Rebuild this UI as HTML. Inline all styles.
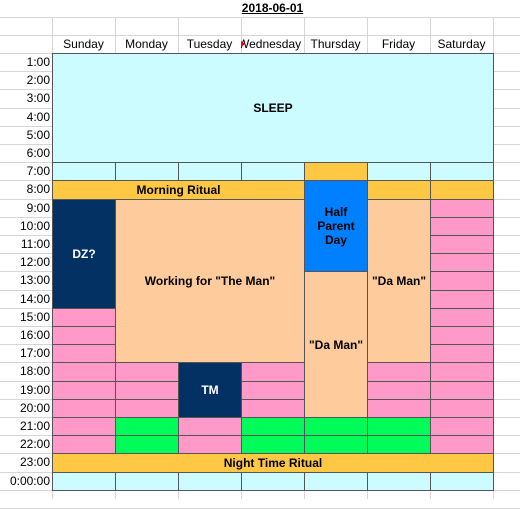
<!DOCTYPE html>
<html><head><meta charset="utf-8"><style>
*{margin:0;padding:0;box-sizing:border-box}
body{width:520px;height:499px;overflow:hidden;background:#fff;font-family:"Liberation Sans",Arial,sans-serif;font-size:12px;color:#000;position:relative}
.c{position:absolute;border:1px solid #555;display:flex;align-items:center;justify-content:center;text-align:center;font-weight:bold;font-size:12px;line-height:14px}
.h{position:absolute;background:#d6d6d6}
.t{position:absolute;text-align:center;font-size:12px;line-height:18px}
.r{position:absolute;left:0;width:50px;text-align:right;font-size:12px;line-height:18px}
</style></head><body>
<div id="g"></div>
<div class="t" style="left:52px;width:441px;top:0;font-weight:bold;text-decoration:underline;line-height:17px">2018-06-01</div>
<div class="t" style="left:52px;width:63px;top:35px">Sunday</div>
<div class="t" style="left:115px;width:63px;top:35px">Monday</div>
<div class="t" style="left:178px;width:63px;top:35px">Tuesday</div>
<div class="t" style="left:241px;width:63px;top:35px;overflow:hidden;white-space:nowrap"><span style="position:relative;left:-3px">Wednesday</span></div>
<div class="t" style="left:304px;width:63px;top:35px">Thursday</div>
<div class="t" style="left:367px;width:63px;top:35px">Friday</div>
<div class="t" style="left:430px;width:63px;top:35px">Saturday</div>
<div id="hrs">
<div class="r" style="top:53px">1:00</div><div class="r" style="top:71px">2:00</div><div class="r" style="top:89px">3:00</div><div class="r" style="top:108px">4:00</div><div class="r" style="top:126px">5:00</div><div class="r" style="top:144px">6:00</div><div class="r" style="top:162px">7:00</div><div class="r" style="top:180px">8:00</div><div class="r" style="top:199px">9:00</div><div class="r" style="top:217px">10:00</div><div class="r" style="top:235px">11:00</div><div class="r" style="top:253px">12:00</div><div class="r" style="top:271px">13:00</div><div class="r" style="top:290px">14:00</div><div class="r" style="top:308px">15:00</div><div class="r" style="top:326px">16:00</div><div class="r" style="top:344px">17:00</div><div class="r" style="top:362px">18:00</div><div class="r" style="top:381px">19:00</div><div class="r" style="top:399px">20:00</div><div class="r" style="top:417px">21:00</div><div class="r" style="top:435px">22:00</div><div class="r" style="top:453px">23:00</div><div class="r" style="top:472px">0:00:00</div>
</div>
<div id="cells"></div>
<div class="c" style="left:52px;top:53px;width:442px;height:110px;background:#ccfcff">SLEEP</div>
<div class="c" style="left:52px;top:180px;width:253px;height:20px;background:#fec845">Morning Ritual</div>
<div class="c" style="left:304px;top:180px;width:64px;height:92px;background:#0080fe">Half<br>Parent<br>Day</div>
<div class="c" style="left:52px;top:199px;width:64px;height:110px;background:#033163;color:#fff">DZ?</div>
<div class="c" style="left:115px;top:199px;width:190px;height:164px;background:#fecb9c">Working for "The Man"</div>
<div class="c" style="left:367px;top:199px;width:64px;height:164px;background:#fecb9c">"Da Man"</div>
<div class="c" style="left:304px;top:271px;width:64px;height:147px;background:#fecb9c">"Da Man"</div>
<div class="c" style="left:178px;top:362px;width:64px;height:56px;background:#033163;color:#fff">TM</div>
<div class="c" style="left:52px;top:453px;width:442px;height:20px;background:#fec845">Night Time Ritual</div>
<script>
var X=[52,115,178,241,304,367,430,493];
function T(i){return Math.round(53+i*18.2);}
var g='';
// grid lines
var ys=[17,35];for(var i=0;i<=25;i++)ys.push(T(i));
ys.forEach(function(y){g+='<div class="h" style="left:0;top:'+y+'px;width:520px;height:1px"></div>';});
X.forEach(function(x){g+='<div class="h" style="left:'+x+'px;top:17px;width:1px;height:482px"></div>';});
document.getElementById('g').innerHTML=g;
var C={c:'#ccfcff',o:'#fec845',p:'#fe99c8',g:'#00fc58'};
var s='';
function cell(col,row,k){var t=T(row),b=T(row+1);s+='<div class="c" style="left:'+X[col]+'px;top:'+t+'px;width:64px;height:'+(b-t+1)+'px;background:'+C[k]+'"></div>';}
for(var c=0;c<7;c++){cell(c,6,c==4?'o':'c');cell(c,23,'c');}
cell(5,7,'o');cell(6,7,'o');
for(var r=14;r<=21;r++)cell(0,r,'p');
for(var r=8;r<=21;r++)cell(6,r,'p');
for(var r=17;r<=19;r++){cell(1,r,'p');cell(3,r,'p');cell(5,r,'p');}
for(var r=20;r<=21;r++){cell(1,r,'g');cell(2,r,'p');cell(3,r,'g');cell(4,r,'g');cell(5,r,'g');}
document.getElementById('cells').innerHTML=s;
</script>
<div style="position:absolute;left:241px;top:41px;width:0;height:0;border-top:3px solid transparent;border-bottom:3px solid transparent;border-left:4px solid #e00"></div>
</body></html>
